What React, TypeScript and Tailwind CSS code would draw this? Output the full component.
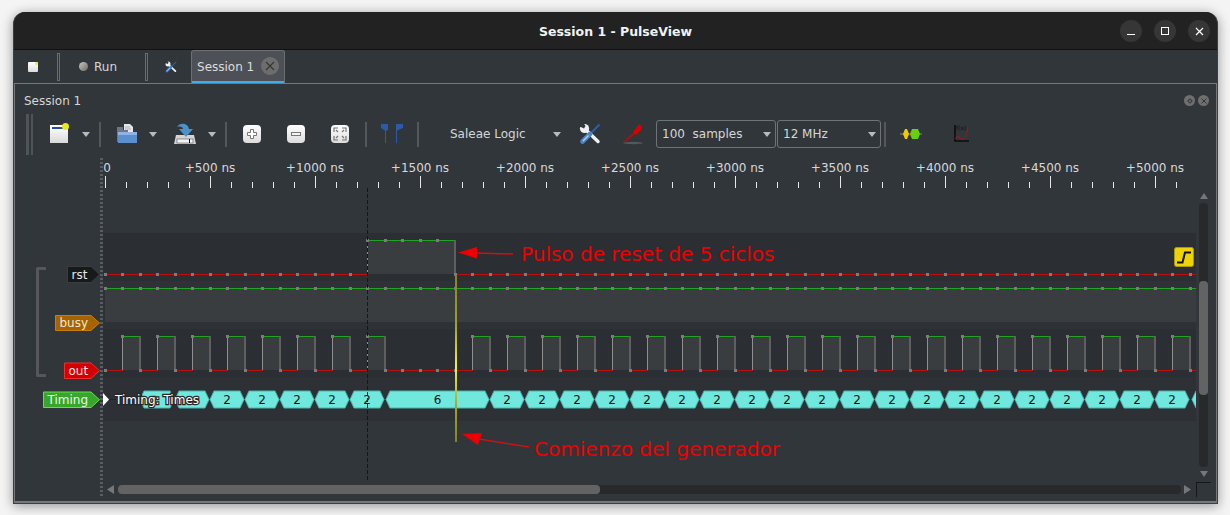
import React from 'react';

const T0 = 105;
const STEP = 17.5;
const RULER = Array.from({ length: 11 }, (_, i) => i);
const MINOR = Array.from({ length: 52 }, (_, i) => i).filter(i => i % 5 !== 0);

// samples: true = high
const samples = (fn: (i: number) => boolean) => Array.from({ length: 63 }, (_, i) => fn(i));
const rst = samples(i => i >= 15 && i < 20);
const busy = samples(() => true);
const out = samples(i => {
  if (i < 1) return false;
  if (i <= 16) return i % 2 === 1;
  if (i < 21) return false;
  return i % 2 === 1;
});

const Trace = ({ data, hi, lo }: { data: boolean[]; hi: number; lo: number }) => {
  const parts: React.ReactNode[] = [];
  data.forEach((v, i) => {
    const x = T0 + i * STEP;
    if (v) {
      parts.push(<rect key={`f${i}`} x={x} y={hi} width={STEP} height={lo - hi} fill="#3a3d40" />);
      parts.push(<rect key={`h${i}`} x={x} y={hi} width={STEP} height={1} fill="#1fa61f" />);
    } else {
      parts.push(<rect key={`l${i}`} x={x} y={lo} width={STEP} height={1} fill="#b80f0f" />);
    }
    if (i > 0 && data[i - 1] !== v) {
      parts.push(
        v
          ? <rect key={`e${i}`} x={Math.floor(x)} y={hi} width={1} height={lo - hi} fill="#8f8f8f" />
          : <rect key={`e${i}`} x={Math.floor(x) - 1} y={hi} width={2} height={lo - hi} fill="#5f5f5f" />
      );
    }
  });
  data.forEach((v, i) => {
    const x = Math.floor(T0 + i * STEP);
    parts.push(<rect key={`d${i}`} x={x - 1} y={(v ? hi : lo) - 1} width={3} height={3} fill="#7c7c7c" />);
  });
  return <g shapeRendering="crispEdges">{parts}</g>;
};

const Hex = ({ a, b, label }: { a: number; b: number; label?: string }) => (
  <g>
    <polygon
      points={`${a},399.5 ${a + 4},391 ${b - 4},391 ${b},399.5 ${b - 4},408 ${a + 4},408`}
      fill="#70e8dd"
      stroke="#48b5ac"
      strokeWidth="1"
    />
    {label && <text x={(a + b) / 2} y={404} textAnchor="middle" className="text-[12px]" fill="#111">{label}</text>}
  </g>
);

const Tag = ({ left, top, bottom, text, fill, stroke, color }: { left: number; top: number; bottom: number; text: string; fill: string; stroke: string; color: string }) => {
  const mid = (top + bottom) / 2;
  return (
    <g>
      <polygon
        points={`${left},${top} 91,${top} 99.5,${mid} 91,${bottom} ${left},${bottom}`}
        fill={fill}
        stroke={stroke}
        strokeWidth="1"
      />
      <text x={left + 4} y={mid + 4} className="text-[12px]" fill={color}>{text}</text>
    </g>
  );
};

const centers = [227, 262, 297, 332, 367];
const after = Array.from({ length: 20 }, (_, i) => 507 + i * 35);

const Chart = () => (
  <svg width={1181} height={326} viewBox="15 155 1181 326" className="block">
    <defs>
      <linearGradient id="ruleGlow" x1="0" y1="0" x2="0" y2="1">
        <stop offset="0" stopColor="#85851f" />
        <stop offset="0.3" stopColor="#a0a02a" />
        <stop offset="0.55" stopColor="#f0f04a" />
        <stop offset="0.8" stopColor="#a0a02a" />
        <stop offset="1" stopColor="#85851f" />
      </linearGradient>
      <clipPath id="decodeClip">
        <rect x="142" y="385" width="1054" height="30" />
      </clipPath>
    </defs>

    {/* ruler */}
    {RULER.map(i => (
      <g key={i}>
        <rect x={105 + i * 105} y={176} width={1} height={12} fill="#e6e6e6" />
        <text x={i === 0 ? 107 : 105 + i * 105} y={172} textAnchor="middle" className="text-[12px]" fill="#d8d8d8">
          {i === 0 ? '0' : `+${i * 500} ns`}
        </text>
      </g>
    ))}
    {MINOR.map(i => <rect key={i} x={105 + i * 21} y={182} width={1} height={6} fill="#e6e6e6" />)}

    {/* row bands */}
    <rect x="103" y="233" width="1093" height="48" fill="#2b2e33" />
    <rect x="103" y="281" width="1093" height="48" fill="#2e3237" />
    <rect x="103" y="329" width="1093" height="48" fill="#2b2e33" />
    <rect x="103" y="377" width="1093" height="44" fill="#2d3035" />

    <Trace data={rst} hi={240} lo={274} />
    <Trace data={busy} hi={288} lo={322} />
    <Trace data={out} hi={336} lo={370} />

    {/* decoder row */}
    <rect x="110" y="399" width="6" height="1" fill="#222" />
    <g clipPath="url(#decodeClip)">
      <Hex a={140} b={174} />
      <Hex a={175} b={209} />
      {centers.map(c => <Hex key={c} a={c - 17} b={c + 17} label="2" />)}
      <Hex a={386} b={489} label="6" />
      {after.map(c => <Hex key={c} a={c - 17} b={c + 17} label="2" />)}
      <Hex a={1192} b={1226} />
    </g>
    <polygon points="103,393 109,399.5 103,406" fill="#fff" />
    <text x={115} y={404} className="text-[12px]" fill="#fff" stroke="#26282b" strokeWidth="2.5" paintOrder="stroke">Timing: Times</text>

    {/* cursor and marker */}
    <line x1="367.5" y1="188" x2="367.5" y2="480" stroke="#0b0b6e" strokeWidth="1" strokeDasharray="4 2" />
    <rect x="455" y="275" width="2" height="167" fill="url(#ruleGlow)" />

    {/* bracket */}
    <path d="M46 268.5H37.5V375.5H46" fill="none" stroke="#55575a" strokeWidth="3" strokeLinejoin="round" />

    <Tag left={67.5} top={266.5} bottom={282.5} text="rst" fill="#17191a" stroke="#3a3c3e" color="#e8e8e8" />
    <Tag left={55.5} top={315.5} bottom={330.5} text="busy" fill="#a66300" stroke="#c77d15" color="#f2e6d0" />
    <Tag left={64.5} top={363} bottom={378.5} text="out" fill="#d20000" stroke="#f03030" color="#fbe5e5" />
    <Tag left={43.5} top={392} bottom={407.5} text="Timing" fill="#38a62a" stroke="#62e04d" color="#eaf8e8" />

    {/* trigger badge */}
    <rect x="1174.5" y="247.5" width="19" height="19" rx="2" fill="#edd400" stroke="#a8980e" />
    <path d="M1177 262.5H1182.5L1185 252.5H1191" fill="none" stroke="#111" strokeWidth="2" />

    {/* annotations */}
    <polygon points="458,252.5 477,247 477,258.5" fill="#ee0000" />
    <line x1="476" y1="253" x2="513" y2="254" stroke="#c81414" strokeWidth="1.5" />
    <text x={521} y={261} className="text-[20px]" fill="#ee0000">Pulso de reset de 5 ciclos</text>
    <polygon points="462,434 482,433 478,445" fill="#ee0000" />
    <line x1="479" y1="439" x2="529" y2="447" stroke="#c81414" strokeWidth="1.5" />
    <text x={534} y={456} className="text-[20px]" fill="#ee0000">Comienzo del generador</text>
  </svg>
);

const Arrow = ({ className }: { className: string }) => (
  <svg width="8" height="5" viewBox="0 0 8 5" className={className}><polygon points="0,0 8,0 4,5" fill="#b8babc" /></svg>
);

const Sep = ({ className }: { className: string }) => <div className={`w-[2px] h-[25px] bg-[#54575b] ${className}`} />;

const Whiten = ({ children, className }: { children: React.ReactNode; className: string }) => (
  <div className={`w-[18px] h-[18px] rounded-[4px] bg-gradient-to-b from-[#ffffff] to-[#dcdcdc] flex items-center justify-center ${className}`}>
    {children}
  </div>
);

const ToolsIcon = ({ size, className }: { size: number; className: string }) => (
  <svg width={size} height={size} viewBox="0 0 22 22" className={className}>
    <path d="M20.5 1.5L11 11" stroke="#2f5f9e" strokeWidth="2" />
    <path d="M7 7L19 18.5" stroke="#eef0f2" strokeWidth="3.4" strokeLinecap="round" />
    <circle cx="5.5" cy="5.5" r="4.6" fill="#eef0f2" />
    <path d="M0 0h4.5L6.5 3 5 5.5 2 4 0 4.5z" fill="#31363b" />
    <path d="M11 11L3.5 18.5" stroke="#4d85c4" strokeWidth="4.6" strokeLinecap="round" />
    <path d="M9.5 12.5L4 18" stroke="#b6d0ec" strokeWidth="1.2" />
  </svg>
);

export default function App() {
  return (
    <div className="w-[1230px] h-[515px] bg-[#f4f4f4] pt-[12px] pl-[13px] font-['DejaVu_Sans',sans-serif] overflow-hidden">
      <div className="w-[1205px] h-[492px] rounded-t-[12px] overflow-hidden bg-[#31363b] flex flex-col shadow-[0_2px_12px_rgba(0,0,0,0.4)] border-b border-x border-[#3c3f42]">
        {/* title bar */}
        <div className="h-[38px] shrink-0 bg-[#222222] border-b border-[#111] relative flex items-center justify-center">
          <span className="text-[12.5px] font-bold text-[#f2f2f2] mt-[4px]">Session 1 - PulseView</span>
          <div className="absolute right-[7px] top-[8px] flex gap-[12px]">
            <div className="w-[22px] h-[22px] rounded-full bg-[#363636] flex items-center justify-center">
              <div className="w-[8px] h-[1px] bg-white mt-[6px]" />
            </div>
            <div className="w-[22px] h-[22px] rounded-full bg-[#363636] flex items-center justify-center">
              <div className="w-[8px] h-[8px] border border-white" />
            </div>
            <div className="w-[22px] h-[22px] rounded-full bg-[#363636] flex items-center justify-center">
              <svg width="9" height="9" viewBox="0 0 9 9"><path d="M1 1L8 8M8 1L1 8" stroke="#fff" strokeWidth="1.2" /></svg>
            </div>
          </div>
        </div>

        {/* main tab strip */}
        <div className="h-[33px] shrink-0 flex items-center text-[12px] text-[#d6d6d6]">
          <div className="ml-[14px] w-[10px] h-[10px] bg-gradient-to-b from-[#ffffff] to-[#dddddd] rounded-[1px] relative">
            <div className="absolute right-0 top-0 w-[3px] h-[3px] rounded-full bg-[#e8e850]" />
          </div>
          <div className="ml-[19px] w-[3px] h-[28px] border border-[#6b6e71]" />
          <div className="ml-[19px] w-[9px] h-[9px] rounded-full bg-gradient-to-br from-[#c8c8c0] to-[#6c6c66]" />
          <span className="ml-[6px] mt-[1px]">Run</span>
          <div className="ml-[28px] w-[3px] h-[28px] border border-[#6b6e71]" />
          <ToolsIcon size={12} className="ml-[17px]" />
          <div className="ml-[14px] w-[94px] h-[33px] self-end bg-[#4d5157] border border-b-0 border-[#6d7073] rounded-t-[3px] flex flex-col">
            <div className="flex-1 flex items-center pl-[5px] text-[#dcdcdc]">
              <span className="mt-[2px]">Session 1</span>
              <div className="ml-[7px] w-[18px] h-[18px] rounded-full bg-[#6d6d6d] flex items-center justify-center">
                <svg width="10" height="10" viewBox="0 0 10 10"><path d="M1 1L9 9M9 1L1 9" stroke="#34373a" strokeWidth="1.3" /></svg>
              </div>
            </div>
            <div className="h-[2px] bg-[#3daee9]" />
          </div>
        </div>

        {/* session dock */}
        <div className="flex-1 min-h-0 border border-[#75787b] border-b-2 flex flex-col text-[12px] text-[#d6d6d6]">
          <div className="h-[29px] shrink-0 flex items-center pl-[9px] relative">
            <span className="mt-[4px]">Session 1</span>
            <div className="absolute right-[7px] top-[11px] flex gap-[3px]">
              <div className="w-[11px] h-[11px] rounded-full bg-[#6f6f6f] flex items-center justify-center">
                <div className="w-[4px] h-[4px] rotate-45 border border-[#34373a]" />
              </div>
              <div className="w-[11px] h-[11px] rounded-full bg-[#6f6f6f] flex items-center justify-center">
                <svg width="6" height="6" viewBox="0 0 6 6"><path d="M.5.5L5.5 5.5M5.5.5L.5 5.5" stroke="#34373a" /></svg>
              </div>
            </div>
          </div>

          {/* toolbar */}
          <div className="h-[42px] shrink-0 flex items-center">
            <div className="ml-[11px] w-[3px] h-[41px] bg-[#505357]" />
            <div className="ml-[2px] w-[2px] h-[41px] bg-[#505357]" />
            {/* new */}
            <div className="ml-[17px] w-[18px] h-[18px] bg-gradient-to-b from-[#ffffff] to-[#d9d9d9] relative">
              <div className="absolute left-[2px] top-[2px] w-[13px] h-[2px] bg-[#2b4f91]" />
              <div className="absolute -right-[1px] -top-[2px] w-[7px] h-[7px] rounded-full bg-[#e8e820]" />
            </div>
            <Arrow className="ml-[14px]" />
            <Sep className="ml-[9px]" />
            {/* open */}
            <svg width="20" height="20" viewBox="0 0 20 20" className="ml-[16px]">
              <path d="M7 0h6l3 3v6H7z" fill="#e8e8e8" />
              <path d="M8 3h5M8 5h6" stroke="#9a9a9a" strokeWidth=".7" />
              <path d="M0 3h6v3h5v12H0z" fill="#6d7682" />
              <path d="M1 8h19v11H1z" fill="#5b8fd0" />
              <path d="M1 8h19v3H1z" fill="#8db4e4" />
            </svg>
            <Arrow className="ml-[12px]" />
            <svg width="22" height="22" viewBox="0 0 22 22" className="ml-[17px]">
              <path d="M2 12h18l2 9H0z" fill="#d2d4d6" />
              <rect x="3" y="16" width="16" height="4" fill="#f4f4f4" stroke="#555" strokeWidth=".6" />
              <rect x="15" y="16" width="1" height="4" fill="#111" />
              <path d="M3 4C6 -1 14 0 15 6h4l-7 8-7-8h4C9 4 6 3 3 4z" fill="#4a93c9" />
            </svg>
            <Arrow className="ml-[12px]" />
            <Sep className="ml-[9px]" />
            <Whiten className="ml-[16px]">
              <svg width="12" height="12" viewBox="0 0 12 12"><path d="M4.5 1.5h3v3h3v3h-3v3h-3v-3h-3v-3h3z" fill="#fff" stroke="#777" /></svg>
            </Whiten>
            <Whiten className="ml-[26px]">
              <div className="w-[10px] h-[4px] border border-[#777] bg-[#f4f4f4]" />
            </Whiten>
            <Whiten className="ml-[26px]">
              <svg width="14" height="14" viewBox="0 0 14 14"><path d="M1 5V1h4M9 1h4v4M1 9v4h4M13 9v4H9M3 3l2 2M11 3L9 5M3 11l2-2M11 11L9 9" fill="none" stroke="#777" strokeWidth="1.2" /></svg>
            </Whiten>
            <Sep className="ml-[16px]" />
            <svg width="22" height="20" viewBox="0 0 22 20" className="ml-[14px]">
              <path d="M0 0h7v6l-2 1v12H4V6.5L0 4z" fill="#2c5aa8" />
              <path d="M15 0h7v4l-6 2.5V19h-1z" fill="#2c5aa8" />
            </svg>
            <Sep className="ml-[14px]" />
            <span className="ml-[31px] w-[93px]">Saleae Logic</span>
            <Arrow className="ml-[10px]" />
            <ToolsIcon size={22} className="ml-[18px]" />
            <svg width="20" height="22" viewBox="0 0 20 22" className="ml-[22px]">
              <ellipse cx="10" cy="20" rx="10" ry="1.2" fill="#55585b" />
              <path d="M0 19L11 9l1.5 1.5L1 19.5z" fill="#d40000" />
              <path d="M10 9l6-8 3 3-1 3-5 5z" fill="#d80000" />
            </svg>
            <div className="ml-[13px] w-[120px] h-[28px] border border-[#707376] rounded-[3px] flex items-center pl-[5px] justify-between pr-[4px]">
              <span>100&nbsp;&nbsp;samples</span>
              <Arrow className="" />
            </div>
            <div className="ml-[1px] w-[104px] h-[28px] border border-[#707376] rounded-[3px] flex items-center pl-[5px] justify-between pr-[4px]">
              <span>12 MHz</span>
              <Arrow className="" />
            </div>
            <Sep className="ml-[3px]" />
            <svg width="22" height="12" viewBox="0 0 22 12" className="ml-[14px]">
              <path d="M0 6h22" stroke="#8c8e60" />
              <path d="M3 6l2-5h2l2 5-2 5H5z" fill="#f2c800" />
              <path d="M10 6l2-5h6l2 5-2 5h-6z" fill="#66cf10" />
            </svg>
            <svg width="18" height="20" viewBox="0 0 18 20" className="ml-[30px]">
              <path d="M3 1v16h14" fill="none" stroke="#0c0c0c" strokeWidth="1.6" />
              <path d="M3 15c3-6 5 1 8 0s4-6 5-12" fill="none" stroke="#a01818" strokeWidth="1" />
              <text x="4" y="6" className="text-[6px]" fill="#111">f(x)</text>
            </svg>
          </div>

          {/* traces */}
          <div className="flex-1 min-h-0 flex relative">
            <div className="absolute left-[85px] top-[3px] h-[340px] w-[3px] bg-[repeating-linear-gradient(to_bottom,#5a5d60_0,#5a5d60_2px,transparent_2px,transparent_4px)]" />
            <div className="flex flex-col">
              <Chart />
              <div className="h-[9px] mt-[4px] flex items-center">
                <svg width="8" height="9" viewBox="0 0 8 9" className="ml-[92px]"><polygon points="0,4.5 7,0 7,9" fill="#75787b" /></svg>
                <div className="ml-[3px] w-[1063px] h-[9px] rounded-[4px] bg-[#28292b]">
                  <div className="w-[482px] h-[9px] rounded-[4px] bg-[#636363]" />
                </div>
                <svg width="8" height="9" viewBox="0 0 8 9" className="ml-[3px]"><polygon points="0,0 7,4.5 0,9" fill="#75787b" /></svg>
              </div>
            </div>
            <div className="ml-[3px] w-[9px] flex flex-col items-center">
              <svg width="8" height="6" viewBox="0 0 8 6" className="mt-[38px]"><polygon points="0,6 4,0 8,6" fill="#75787b" /></svg>
              <div className="mt-[4px] w-[9px] h-[264px] rounded-[4px] bg-[#28292b]">
                <div className="relative top-[78px] w-[9px] h-[114px] rounded-[4px] bg-[#636363]" />
              </div>
              <svg width="8" height="6" viewBox="0 0 8 6" className="mt-[4px]"><polygon points="0,0 8,0 4,6" fill="#75787b" /></svg>
            </div>
            <div className="absolute left-[1181px] top-[327px] w-[15px] h-[15px] border-t border-l border-[#16181a]" />
          </div>
        </div>
      </div>
    </div>
  );
}
